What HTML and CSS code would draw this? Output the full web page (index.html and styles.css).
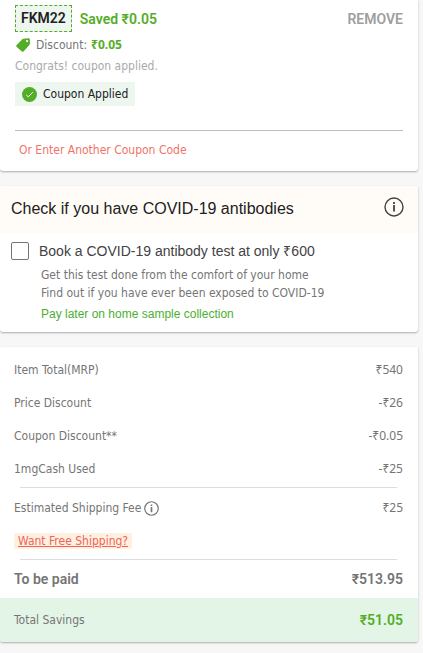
FILE: index.html
```html
<!DOCTYPE html>
<html lang="en">
<head>
    <meta charset="UTF-8" />
    <meta name="viewport" content="width=device-width, initial-scale=1.0" />
    <title>Cart Summary</title>
    <link rel="stylesheet" href="styles.css">
</head>
<body>
    <!-- Applied coupon -->
    <section class="card coupon">
        <div class="coupon-top">
            <span class="coupon-code">FKM22</span>
            <span class="coupon-saved">Saved ₹0.05</span>
            <button type="button" class="remove">REMOVE</button>
        </div>
        <div class="discount">
            <svg class="tag-icon" viewBox="0 0 14 14" aria-hidden="true">
                <path fill="#54ad28" fill-rule="evenodd" d="M7.4.8 12.6.2Q13.7.1 13.8 1.300L14 5.300Q14 6.200 13.400 6.900L7.500 13.400Q6.700 14.200 5.900 13.400L.5 8.700Q-.2 8 .5 7.300L6 1.500Q6.600.9 7.400.8ZM11.100 1.900A1.150 1.150 0 1 0 11.100 4.200A1.150 1.150 0 1 0 11.100 1.900Z" />
            </svg>
            <span>Discount:</span>
            <strong>₹0.05</strong>
        </div>
        <p class="congrats">Congrats! coupon applied.</p>
        <div class="applied">
            <svg class="check-icon" viewBox="0 0 15 15" aria-hidden="true">
                <circle cx="7.5" cy="7.5" r="7.5" fill="#54ad28" />
                <path d="M4.300 8 6.300 9.800 10.800 5.300" fill="none" stroke="#fff" />
            </svg>
            <span>Coupon Applied</span>
        </div>
        <div class="another">
            <a href="#">Or Enter Another Coupon Code</a>
        </div>
    </section>

    <!-- Antibody test offer -->
    <section class="card test">
        <div class="test-header">
            <h2>Check if you have COVID-19 antibodies</h2>
            <button type="button" class="info" aria-label="More information">
                <svg class="info-icon" viewBox="0 0 20 20">
                    <circle cx="10" cy="10" r="9" fill="none" stroke="currentColor" stroke-width="1.400" />
                    <path d="M10 5v2M10 8v6.500" stroke="currentColor" stroke-width="1.800" />
                </svg>
            </button>
        </div>
        <div class="test-body">
            <input type="checkbox" id="book-test" class="checkbox" />
            <div class="test-text">
                <label for="book-test">Book a COVID-19 antibody test at only ₹600</label>
                <p>Get this test done from the comfort of your home</p>
                <p>Find out if you have ever been exposed to COVID-19</p>
                <p class="pay-later">Pay later on home sample collection</p>
            </div>
        </div>
    </section>

    <!-- Bill -->
    <section class="card bill">
        <div class="row"><span>Item Total(MRP)</span><span class="amount">₹540</span></div>
        <div class="row"><span>Price Discount</span><span class="amount">-₹26</span></div>
        <div class="row"><span>Coupon Discount**</span><span class="amount">-₹0.05</span></div>
        <div class="row"><span>1mgCash Used</span><span class="amount">-₹25</span></div>
        <hr />
        <div class="row">
            <span class="fee">Estimated Shipping Fee
                <svg class="fee-icon" viewBox="0 0 20 20" aria-hidden="true">
                    <circle cx="10" cy="10" r="9" fill="none" stroke="currentColor" stroke-width="1.600" />
                    <path d="M10 4.500v2.300M10 8v7" stroke="currentColor" stroke-width="2.200" />
                </svg>
            </span>
            <span class="amount">₹25</span>
        </div>
        <div class="row"><a href="#" class="free-shipping">Want Free Shipping?</a></div>
        <hr />
        <div class="row total"><span>To be paid</span><span>₹513.95</span></div>
        <div class="row savings"><span>Total Savings</span><strong>₹51.05</strong></div>
    </section>
</body>
</html>
```

FILE: styles.css
```css
body {
    margin: 0;
    padding-right: 5px;
    background-color: #f7f7f7;
    color: #757575;
    font-family: "DejaVu Sans Condensed", "Noto Sans", sans-serif;
    font-size: 12px;
    line-height: 18px;
}

h2, p {
    margin: 0;
}

button {
    padding: 0;
    border: none;
    background: none;
    cursor: pointer;
}

.card {
    margin-bottom: 15px;
    background-color: #fff;
    border-radius: 0 0 3px 3px;
    box-shadow: 0 1px 2px rgba(0, 0, 0, 0.3);
    overflow: hidden;
}

/* Coupon card */
.coupon {
    padding: 5px 15px 12px;
}

.coupon-top {
    display: flex;
    align-items: center;
}

.coupon-code,
.coupon-saved,
.remove,
.total,
.savings strong {
    font-family: Roboto, sans-serif;
    font-size: 14px;
    font-weight: 600;
}

.coupon-code {
    padding: 0 5px;
    border: 1px dashed #54ad28;
    background-color: #edf7f0;
    color: #212121;
    line-height: 25px;
}

.coupon-saved {
    margin-left: 8px;
    color: #54ad28;
}

.remove {
    margin-left: auto;
    color: #9e9e9e;
}

.discount {
    display: flex;
    align-items: center;
    margin-top: 4px;
}

.tag-icon {
    width: 14px;
    height: 14px;
    margin: 0 6px 0 1px;
}

.discount strong {
    margin-left: 4px;
    color: #54ad28;
    font-family: "Noto Sans", sans-serif;
    font-weight: 700;
}

.congrats {
    margin-top: 3px;
    color: #aaa;
}

.applied {
    display: inline-flex;
    align-items: center;
    gap: 6px;
    margin-top: 7px;
    padding: 3px 7px;
    background-color: #edf7f0;
    color: #212121;
}

.check-icon {
    width: 15px;
    height: 15px;
}

.another {
    margin-top: 23px;
    padding: 10px 4px 0;
    border-top: 1px solid #bdbdbd;
}

.another a {
    color: #f0736a;
    text-decoration: none;
}

/* Antibody test card */
.test-header {
    display: flex;
    align-items: center;
    justify-content: space-between;
    padding: 11px 14px 11px 11px;
    background-color: #fffcf7;
}

.test-header h2 {
    color: #212121;
    font-family: "Liberation Sans", sans-serif;
    font-size: 16px;
    font-weight: 400;
    line-height: 24px;
}

.info {
    height: 20px;
    margin-bottom: 5px;
    color: #424242;
}

.info-icon {
    display: block;
    width: 20px;
    height: 20px;
}

.test-body {
    display: flex;
    gap: 10px;
    padding: 9px 11px;
}

.checkbox {
    appearance: none;
    flex: none;
    box-sizing: border-box;
    width: 18px;
    height: 18px;
    margin: 0;
    border: 1px solid #757575;
    border-radius: 2px;
}

.test-text label {
    display: block;
    margin-bottom: 6px;
    color: #424242;
    font-family: "Liberation Sans", sans-serif;
    font-size: 14px;
}

.test-text p {
    padding-left: 2px;
}

.test-text .pay-later {
    margin-top: 3px;
    color: #4caf32;
    font-family: "Liberation Sans", sans-serif;
}

/* Bill card */
.bill {
    padding-top: 7px;
}

.row {
    display: flex;
    align-items: center;
    justify-content: space-between;
    min-height: 33px;
    padding: 0 15px 0 14px;
}

.amount {
    font-family: "Noto Sans", sans-serif;
}

hr {
    margin: 1px 21px 4px 20px;
    border: none;
    border-top: 1px solid #ddd;
}

.fee {
    display: flex;
    align-items: center;
    gap: 3px;
}

.fee-icon {
    width: 15px;
    height: 15px;
}

.free-shipping {
    padding: 0 4px;
    border-radius: 2px;
    background-color: #fff0e0;
    color: #f0635a;
    line-height: 16px;
}

.total {
    min-height: 30px;
    padding-bottom: 4px;
}

.savings {
    min-height: 44px;
    background-color: #e3f5e7;
}

.savings strong {
    color: #54ad28;
}
```
